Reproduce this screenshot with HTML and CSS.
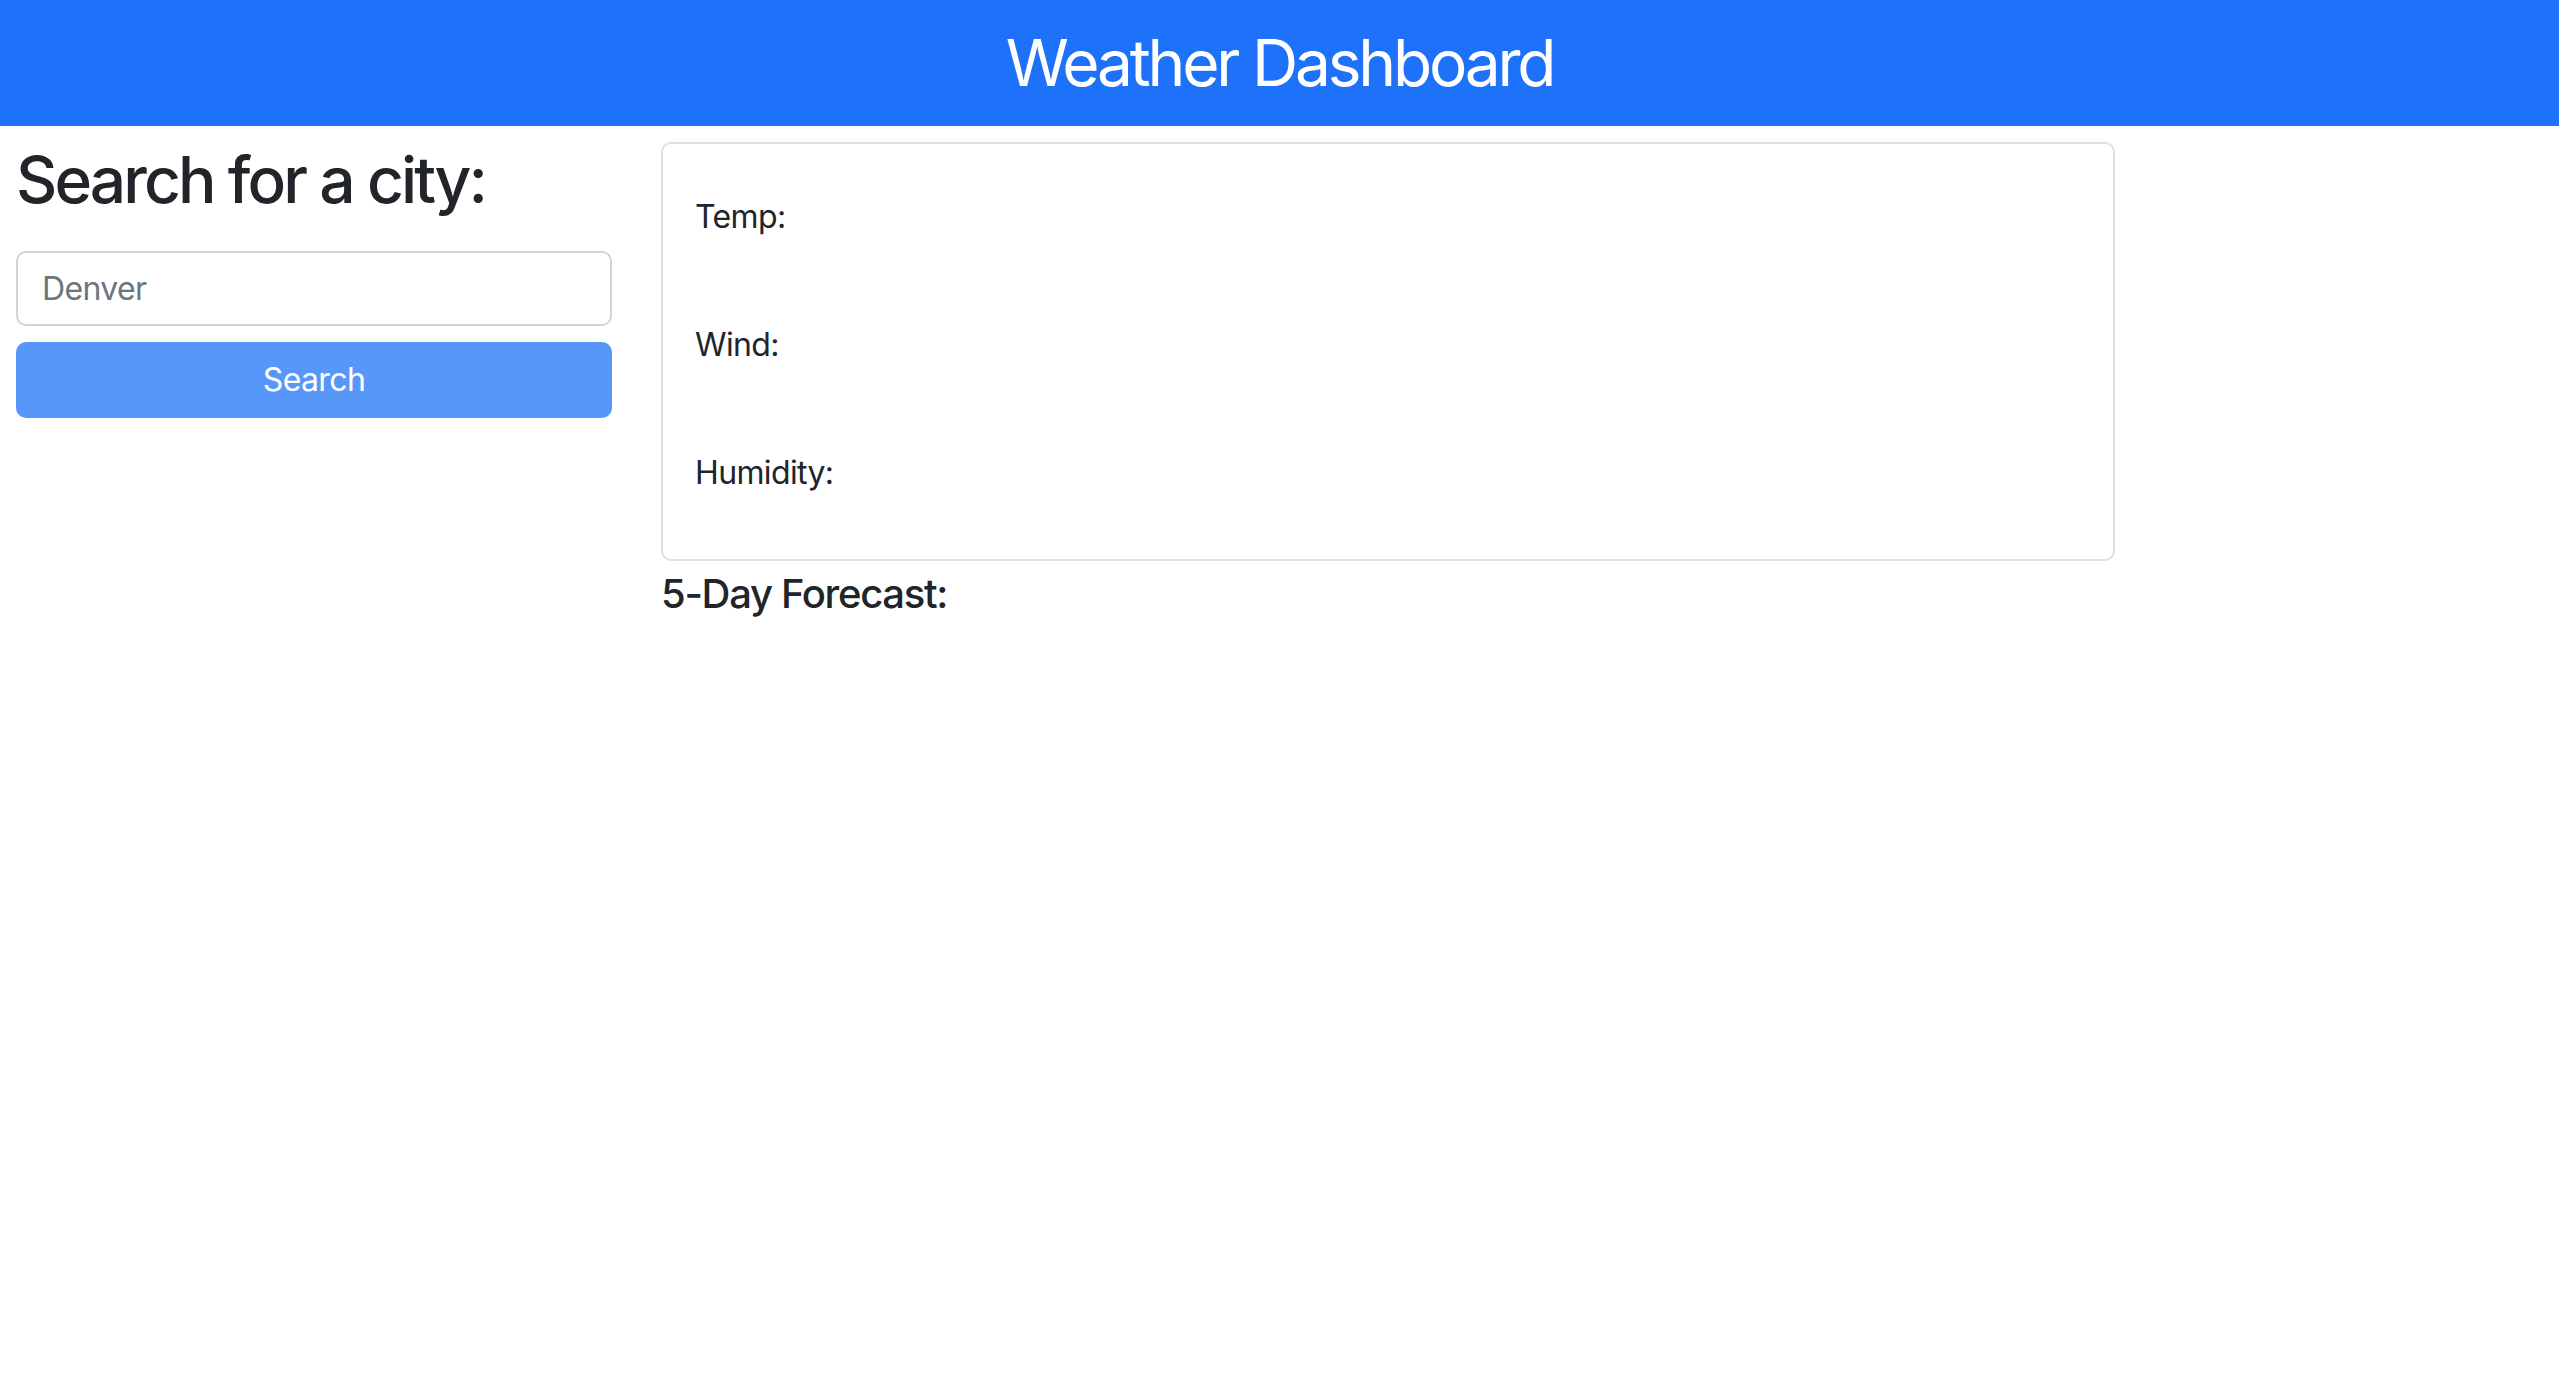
FILE: index.html
```html
<!DOCTYPE html>
<html lang="en">
<head>
<meta charset="utf-8">
<title>Weather Dashboard</title>
<link rel="stylesheet" href="styles.css">
</head>
<body>
<header class="topbar">
  <h1 class="topbar-title">Weather Dashboard</h1>
</header>
<main class="layout">
  <aside class="sidebar">
    <h2 class="sidebar-title">Search for a city:</h2>
    <input class="city-input" type="text" placeholder="Denver">
    <button class="search-btn" type="button">Search</button>
  </aside>
  <section class="content">
    <div class="current-card">
      <p class="stat">Temp:</p>
      <p class="stat">Wind:</p>
      <p class="stat">Humidity:</p>
    </div>
    <h4 class="forecast-title">5-Day Forecast:</h4>
  </section>
</main>
</body>
</html>
```
FILE: styles.css
```css
* { box-sizing: border-box; }
html, body {
  margin: 0;
  padding: 0;
  background: #ffffff;
  color: #212529;
  font-family: "Inter", "Roboto", "Liberation Sans", sans-serif;
}
.topbar {
  height: 126px;
  background: #1e72f9;
  display: flex;
  align-items: center;
  justify-content: center;
}
.topbar-title {
  margin: 0;
  color: #ffffff;
  font-size: 64px;
  font-weight: 400;
  line-height: 1.2;
  letter-spacing: -0.05em;
}
.layout {
  display: flex;
  align-items: flex-start;
  gap: 49px;
  padding: 16px 0 0 16px;
}
.sidebar {
  width: 596px;
  display: flex;
  flex-direction: column;
}
.sidebar-title {
  margin: 0 0 32px 0;
  font-size: 64px;
  font-weight: 500;
  line-height: 1.2;
  letter-spacing: -0.045em;
}
.city-input {
  height: 75px;
  border: 2px solid #ced4da;
  border-radius: 10px;
  padding: 0 24px;
  font-family: inherit;
  font-size: 32px;
  letter-spacing: -0.02em;
  color: #212529;
  outline: none;
}
.city-input::placeholder { color: #6c757d; }
.search-btn {
  margin-top: 16px;
  height: 76px;
  border: 0;
  border-radius: 10px;
  background: #5797fa;
  color: #ffffff;
  font-family: inherit;
  font-size: 32px;
  letter-spacing: -0.02em;
}
.content {
  width: 1454px;
}
.current-card {
  height: 419px;
  border: 2px solid #dedfe0;
  border-radius: 10px;
  padding: 49px 32px 0 32px;
}
.stat {
  margin: 0 0 80px 0;
  font-size: 32px;
  line-height: 48px;
  letter-spacing: -0.02em;
}
.stat:last-child { margin-bottom: 0; }
.forecast-title {
  margin: 9px 0 0 0;
  font-size: 40px;
  font-weight: 500;
  line-height: 1.2;
  letter-spacing: -0.033em;
}
```
